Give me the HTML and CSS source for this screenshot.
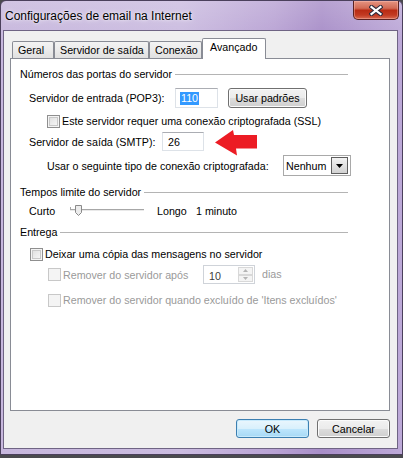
FILE: index.html
```html
<!DOCTYPE html>
<html>
<head>
<meta charset="utf-8">
<link rel="stylesheet" href="styles.css">
</head>
<body>
<div class="window">
  <div class="titlebar">
    <span class="title">Configurações de email na Internet</span>
    <div class="close">
      <svg width="14" height="11" viewBox="0 0 14 11">
        <path d="M2.5 2 L11.5 9 M11.5 2 L2.5 9" stroke="#2e2a3c" stroke-width="4.2" stroke-linecap="square" fill="none"/>
        <path d="M2.5 2 L11.5 9 M11.5 2 L2.5 9" stroke="#ffffff" stroke-width="2.2" stroke-linecap="square" fill="none"/>
      </svg>
    </div>
  </div>
  <div class="client">
    <div class="tabs">
      <div class="tab t-geral">Geral</div>
      <div class="tab t-saida">Servidor de saída</div>
      <div class="tab t-conexao">Conexão</div>
      <div class="tab tab-active t-avancado">Avançado</div>
    </div>
    <div class="panel">
      <div class="group-head"><span>Números das portas do servidor</span><i class="rule"></i></div>
      <div class="row row-pop3">
        <span class="lbl lbl-pop3">Servidor de entrada (POP3):</span>
        <span class="edit edit-pop3"><span class="sel">110</span></span>
        <span class="btn btn-defaults">Usar padrões</span>
      </div>
      <div class="row row-ssl"><span class="cb"></span><span>Este servidor requer uma conexão criptografada (SSL)</span></div>
      <div class="row row-smtp">
        <span class="lbl lbl-smtp">Servidor de saída (SMTP):</span>
        <span class="edit edit-smtp">26</span>
      </div>
      <div class="row row-crypt">
        <span class="lbl lbl-crypt">Usar o seguinte tipo de conexão criptografada:</span>
        <span class="combo"><span class="combo-text">Nenhum</span><span class="combo-btn"><svg width="7" height="4" viewBox="0 0 7 4"><path d="M0 0 H7 L3.5 4 Z" fill="#000"/></svg></span></span>
      </div>

      <div class="group-head head2"><span>Tempos limite do servidor</span><i class="rule"></i></div>
      <div class="row row-slider">
        <span class="lbl lbl-curto">Curto</span>
        <svg class="slider" width="74" height="14" viewBox="0 0 74 14">
          <rect x="0" y="5" width="74" height="1" fill="#a7a7a7"/>
          <rect x="0" y="6" width="74" height="1" fill="#e9e9e9"/>
          <rect x="0" y="3" width="1" height="3" fill="#a7a7a7"/>
          <path d="M5.5 1.5 H11.5 V8.5 L8.5 11.5 L5.5 8.5 Z" fill="#ececec" stroke="#8a8a8a" stroke-width="1"/>
        </svg>
        <span class="lbl lbl-longo">Longo</span>
        <span>1 minuto</span>
      </div>

      <div class="group-head head3"><span>Entrega</span><i class="rule"></i></div>
      <div class="row row-keep"><span class="cb"></span><span>Deixar uma cópia das mensagens no servidor</span></div>
      <div class="row row-remove disabled">
        <span class="cb cb-off"></span>
        <span class="lbl lbl-remove">Remover do servidor após</span>
        <span class="spin">
          <span class="spin-text">10</span>
          <span class="spin-btns">
            <span class="spin-b"><svg width="5" height="3" viewBox="0 0 5 3"><path d="M0 3 H5 L2.5 0 Z" fill="#b4b4b4"/></svg></span>
            <span class="spin-b"><svg width="5" height="3" viewBox="0 0 5 3"><path d="M0 0 H5 L2.5 3 Z" fill="#b4b4b4"/></svg></span>
          </span>
        </span>
        <span class="dias">dias</span>
      </div>
      <div class="row row-remove2 disabled"><span class="cb cb-off"></span><span>Remover do servidor quando excluído de 'Itens excluídos'</span></div>

      <svg class="arrow" width="43" height="26" viewBox="0 0 43 26">
        <path d="M0 12.5 L18 0 L19 5 L42 5 L42 18.5 L21 18.5 L22 25.5 Z" fill="#ec1c24"/>
      </svg>
    </div>
    <div class="buttons">
      <span class="btn btn-ok">OK</span>
      <span class="btn btn-cancel">Cancelar</span>
    </div>
  </div>
</div>
</body>
</html>
```

FILE: styles.css
```css
html, body {
  margin: 0;
  padding: 0;
}
body {
  background: #4a4a4e;
  width: 403px;
  height: 458px;
  overflow: hidden;
  font-family: "Liberation Sans", Arial, sans-serif;
  font-size: 10.7px;
  color: #000;
}
.window {
  box-sizing: border-box;
  width: 403px;
  height: 455px;
  border: 1px solid #4b405c;
  border-radius: 6px 6px 0 0;
  background:
    linear-gradient(180deg, rgba(255,255,255,0.18) 0, rgba(255,255,255,0.05) 29px, rgba(255,255,255,0) 40px),
    linear-gradient(90deg, #c7b7dd 0%, #cbbce0 45%, #b9a3d4 68%, #a88ec8 80%, #bda9d8 100%);
  display: flex;
  flex-direction: column;
  padding: 0 4px 5px 2px;
}
.titlebar {
  height: 29px;
  display: flex;
  align-items: flex-start;
  justify-content: space-between;
}
.title {
  font-size: 12px;
  margin-top: 8px;
  margin-left: 2px;
  text-shadow: 0 0 5px rgba(255,255,255,0.9), 0 0 2px rgba(255,255,255,0.7);
}
.close {
  box-sizing: border-box;
  width: 46px;
  height: 19px;
  margin-right: -1px;
  border: 1px solid #5a2222;
  border-top: none;
  border-radius: 0 0 5px 5px;
  background: linear-gradient(180deg, #e59482 0%, #d26a55 40%, #b92b14 52%, #c23a22 78%, #d86a52 100%);
  box-shadow: inset 0 0 0 1px rgba(255,200,190,0.4);
  display: flex;
  align-items: center;
  justify-content: center;
}
.client {
  flex: 1;
  box-sizing: border-box;
  border: 1px solid #6f6484;
  background: #f0f0f0;
  padding: 7px 7px 10px 6px;
  display: flex;
  flex-direction: column;
}
.tabs {
  height: 20px;
  display: flex;
  align-items: flex-end;
  padding-left: 2px;
}
.tab {
  box-sizing: border-box;
  height: 17px;
  border: 1px solid #898c95;
  border-bottom: none;
  border-radius: 2px 2px 0 0;
  background: linear-gradient(180deg, #f3f3f3 0%, #ebebeb 50%, #e0e0e0 100%);
  padding-left: 5px;
  line-height: 16px;
  white-space: nowrap;
}
.t-geral { width: 42px; }
.t-saida { width: 95px; }
.t-conexao { width: 53px; }
.t-avancado { width: 64px; }
.tab-active {
  height: 21px;
  margin-bottom: -1px;
  position: relative;
  z-index: 1;
  background: #fff;
  padding-left: 7px;
  line-height: 17px;
}
.panel {
  position: relative;
  box-sizing: border-box;
  height: 353px;
  border: 1px solid #898c95;
  background: #fff;
  padding: 8px 0 0 9px;
}
.group-head {
  width: 328px;
  height: 14px;
  display: flex;
  align-items: center;
  white-space: nowrap;
}
.rule {
  flex: 1;
  height: 1px;
  background: #b4b4b4;
  margin-left: 3px;
}
.head2 { margin-top: 9px; }
.head3 { margin-top: 7px; }
.row {
  display: flex;
  align-items: center;
  white-space: nowrap;
}
.lbl { flex: none; }
.row-pop3 { margin-top: 7px; height: 20px; margin-left: 9px; }
.lbl-pop3 { width: 146px; }
.row-ssl { margin-top: 6px; height: 14px; margin-left: 27px; }
.row-smtp { margin-top: 4px; height: 19px; margin-left: 9px; }
.lbl-smtp { width: 133px; }
.row-crypt { margin-top: 4px; height: 21px; margin-left: 27px; }
.lbl-crypt { width: 236px; }
.row-slider { margin-top: 5px; height: 14px; margin-left: 9px; }
.lbl-curto { width: 41px; }
.slider { display: block; flex: none; margin-right: 13px; }
.lbl-longo { width: 39px; }
.row-keep { margin-top: 8px; height: 14px; margin-left: 10px; }
.row-remove { margin-top: 4px; height: 19px; margin-left: 28px; }
.lbl-remove { width: 140px; }
.row-remove2 { margin-top: 9px; height: 14px; margin-left: 28px; }
.disabled { color: #9a9a9a; }

.edit {
  box-sizing: border-box;
  flex: none;
  display: flex;
  align-items: center;
  background: #fff;
  border: 1px solid #dde2e8;
  border-top-color: #abadb3;
  padding-left: 4px;
}
.edit-pop3 { width: 43px; height: 20px; }
.edit-smtp { width: 42px; height: 19px; padding-left: 5px; }
.sel {
  background: #3399ff;
  color: #fff;
  padding: 0 1px;
  line-height: 13px;
}
.btn {
  box-sizing: border-box;
  flex: none;
  display: flex;
  align-items: center;
  justify-content: center;
  border: 1px solid #707070;
  border-radius: 3px;
  background: linear-gradient(180deg, #f2f2f2 0%, #ebebeb 50%, #dddddd 51%, #cfcfcf 100%);
  box-shadow: inset 0 0 0 1px #fbfbfb;
}
.btn-defaults { width: 79px; height: 20px; margin-left: 10px; }
.cb {
  box-sizing: border-box;
  flex: none;
  width: 13px;
  height: 13px;
  border: 1px solid #8f8f8f;
  background: linear-gradient(135deg, #dcdcdc 0%, #eeeeee 60%, #fbfbfb 100%);
  box-shadow: inset 0 0 0 1px #f4f4f4, inset 0 0 0 2px #c8c8c8;
  margin-right: 2px;
}
.cb-off {
  border-color: #c8c8c8;
  background: #f4f4f4;
  box-shadow: none;
}
.combo {
  box-sizing: border-box;
  flex: none;
  width: 68px;
  height: 21px;
  border: 1px solid #a9a9a9;
  background: #fff;
  display: flex;
  align-items: center;
  justify-content: space-between;
  padding: 1px 2px 1px 2px;
}
.combo-btn {
  box-sizing: border-box;
  width: 17px;
  height: 17px;
  border: 1px solid #5e5e5e;
  background: linear-gradient(180deg, #f2f2f2 0%, #e2e2e2 50%, #d2d2d2 100%);
  display: flex;
  align-items: center;
  justify-content: center;
}
.combo-btn svg { display: block; }
.spin {
  box-sizing: border-box;
  flex: none;
  width: 52px;
  height: 19px;
  border: 1px solid #cfd3d9;
  background: #fff;
  display: flex;
  align-items: stretch;
  justify-content: space-between;
  padding: 1px;
}
.spin-text {
  color: #3c3c3c;
  padding-left: 4px;
  display: flex;
  align-items: center;
  padding-top: 2px;
}
.spin-btns {
  width: 15px;
  display: flex;
  flex-direction: column;
}
.spin-b {
  flex: 1;
  box-sizing: border-box;
  border: 1px solid #d8d8d8;
  background: #f4f4f4;
  display: flex;
  align-items: center;
  justify-content: center;
}
.spin-b svg { display: block; }
.dias { margin-left: 7px; margin-top: -2px; }
.arrow {
  position: absolute;
  left: 204px;
  top: 71px;
}
.buttons {
  margin-top: 8px;
  height: 19px;
  display: flex;
  justify-content: flex-end;
  gap: 8px;
}
.btn-ok {
  width: 73px;
  border-color: #3c7fb1;
  background: linear-gradient(180deg, #eaf6fd 0%, #d9f0fc 50%, #bee6fd 51%, #a7d9f5 100%);
  box-shadow: inset 0 0 0 1px #c8eafc;
}
.btn-cancel { width: 73px; }
```
